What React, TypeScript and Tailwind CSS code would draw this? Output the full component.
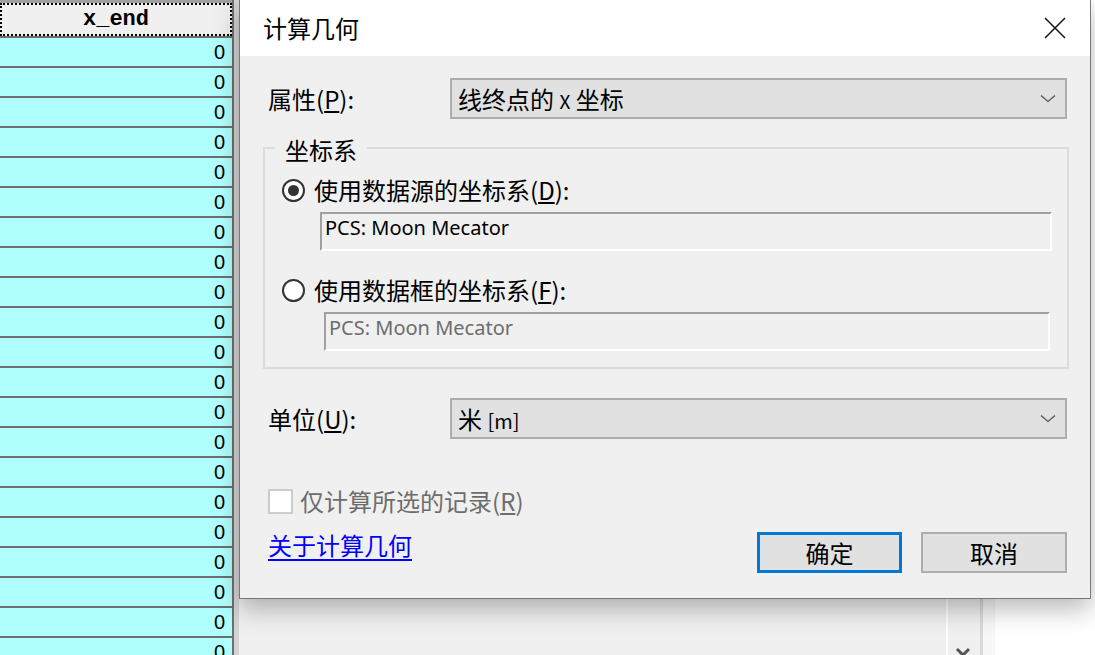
const rows = Array.from({ length: 21 });

function Chevron() {
  return (
    <svg width="16" height="9" viewBox="0 0 16 9" fill="none">
      <path d="M1 1.5l7 6 7-6" stroke="#555" strokeWidth="1.3" />
    </svg>
  );
}

function Select({ value }: { value: React.ReactNode }) {
  return (
    <div className="flex h-[41px] w-[617px] items-center justify-between border-2 border-[#adadad] bg-[#e1e1e1] pl-[6px] pr-[9px]">
      <span>{value}</span>
      <Chevron />
    </div>
  );
}

function Radio({ checked }: { checked?: boolean }) {
  return (
    <div className="flex h-[23px] w-[23px] items-center justify-center rounded-full border-2 border-[#333] bg-white">
      {checked && <div className="h-[11px] w-[11px] rounded-full bg-[#333]" />}
    </div>
  );
}

function TextBox({ text, disabled, className }: { text: string; disabled?: boolean; className: string }) {
  return (
    <div
      className={
        "flex h-[39px] items-center border-2 border-l-[#a0a0a0] border-t-[#a0a0a0] border-r-white border-b-white bg-[#f0f0f0] pb-[7px] pl-[3px] font-['Noto_Sans'] text-[20px] " +
        (disabled ? "text-[#6d6d6d] " : "text-black ") +
        className
      }
    >
      {text}
    </div>
  );
}

function Key({ k }: { k: string }) {
  return (
    <>
      (<span className="underline underline-offset-2">{k}</span>)
    </>
  );
}

export default function App() {
  return (
    <div className="relative flex h-[655px] w-[1095px] overflow-hidden bg-white font-['Noto_Sans_CJK_SC'] text-[24px] text-black">
      {/* attribute table column behind the dialog */}
      <div className="flex w-[232px] shrink-0 flex-col">
        <div className="h-[38px] shrink-0 border-b-2 border-t-[3px] border-b-[#6f6f6f] border-t-[#a0a0a0] bg-[#f0f0f0]">
          <div className="flex h-full items-center justify-center border-2 border-dotted border-black font-mono text-[22px] font-bold leading-none">
            x_end
          </div>
        </div>
        {rows.map((_, i) => (
          <div
            key={i}
            className="flex h-[30px] shrink-0 items-center justify-end border-b-2 border-[#6f6f6f] bg-[#b0ffff] pr-[7px] font-['Liberation_Sans'] text-[20px] leading-none"
          >
            0
          </div>
        ))}
      </div>
      <div className="w-[7px] shrink-0 border-l-2 border-[#6f6f6f] bg-[#d4d4d4]" />
      <div className="w-[707px] shrink-0 bg-[#f0f0f0]" />
      <div className="w-[2px] shrink-0 bg-white" />
      <div className="flex w-[32px] shrink-0 items-end justify-center bg-[#f0f0f0]">
        <svg width="16" height="10" viewBox="0 0 16 10" className="-mb-[2px] ml-[-2px]">
          <path d="M2 2l6 6 6-6" stroke="#555" strokeWidth="3" fill="none" />
        </svg>
      </div>
      <div className="w-[3px] shrink-0 bg-[#dadada]" />
      <div className="w-[12px] shrink-0 bg-[#f7f7f7]" />
      <div className="flex-1 bg-white" />

      {/* dialog window */}
      <div className="absolute left-[239px] top-0 flex h-[599px] w-[852px] flex-col border-x border-b border-[#777] bg-[#f0f0f0] shadow-[0_10px_24px_rgba(0,0,0,0.28)]">
        <div className="flex h-[56px] items-center justify-between bg-white pl-[23px] pr-[22px]">
          <span className="leading-none">计算几何</span>
          <svg width="22" height="22" viewBox="0 0 22 22" className="mr-[2px]">
            <path d="M1 1l20 20M21 1L1 21" stroke="#111" strokeWidth="1.5" />
          </svg>
        </div>

        <div className="mt-[22px] flex h-[41px] items-center">
          <div className="w-[210px] pl-[28px]">
            属性<Key k="P" />:
          </div>
          <Select value={<>线终点的 <span className="text-[19px]">X</span> 坐标</>} />
        </div>

        <fieldset className="ml-[23px] mt-[12px] w-[806px] border-2 border-[#dcdcdc] pb-[16px]">
          <legend className="ml-[10px] px-[10px] pt-[4px] leading-[30px]">坐标系</legend>
          <div className="mt-[10px] flex h-[30px] items-center gap-[9px] pl-[17px]">
            <Radio checked />
            <span>
              使用数据源的坐标系<Key k="D" />:
            </span>
          </div>
          <TextBox text="PCS: Moon Mecator" className="ml-[55px] mt-[7px] w-[732px]" />
          <div className="mt-[24px] flex h-[30px] items-center gap-[9px] pl-[17px]">
            <Radio />
            <span>
              使用数据框的坐标系<Key k="F" />:
            </span>
          </div>
          <TextBox text="PCS: Moon Mecator" disabled className="ml-[59px] mt-[7px] w-[726px]" />
        </fieldset>

        <div className="mt-[29px] flex h-[41px] items-center">
          <div className="w-[210px] pl-[28px]">
            单位<Key k="U" />:
          </div>
          <Select value={<>米 <span className="text-[20px]">[m]</span></>} />
        </div>

        <div className="mt-[49px] flex h-[26px] items-center gap-[7px] pl-[28px] text-[#6d6d6d]">
          <div className="h-[25px] w-[25px] border-2 border-[#cccccc] bg-white" />
          <span>
            仅计算所选的记录<Key k="R" />
          </span>
        </div>

        <div className="mt-[18px] flex items-start justify-between pl-[28px] pr-[23px]">
          <a href="#" className="leading-[26px] text-[#0000ff] underline underline-offset-4">
            关于计算几何
          </a>
          <div className="flex gap-[19px]">
            <button className="flex h-[41px] w-[145px] items-center justify-center border-[3px] border-[#0078d7] bg-[#e1e1e1]">
              确定
            </button>
            <button className="flex h-[41px] w-[146px] items-center justify-center border-2 border-[#adadad] bg-[#e1e1e1]">
              取消
            </button>
          </div>
        </div>
      </div>
    </div>
  );
}
